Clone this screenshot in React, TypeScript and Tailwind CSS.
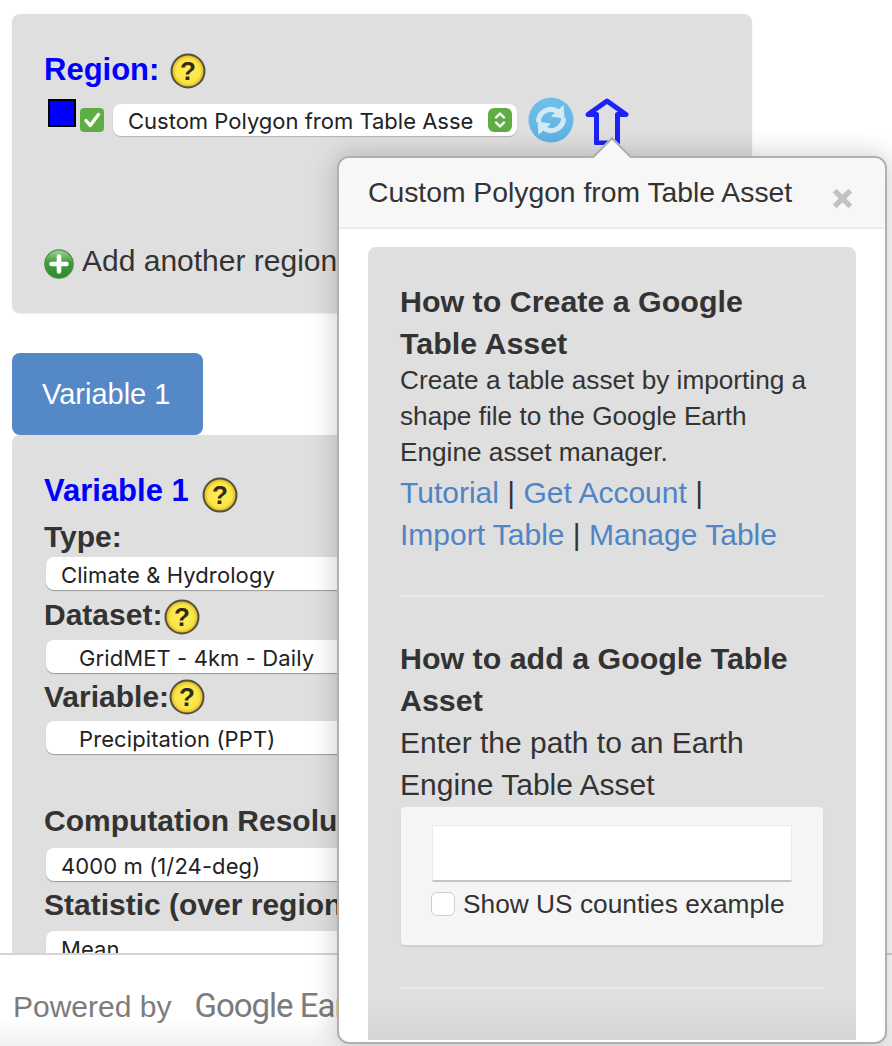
import type { ReactNode } from "react";

const sans = "font-['Liberation_Sans',Arial,sans-serif]";

function HelpIcon({ className = "" }: { className?: string }) {
  return (
    <svg viewBox="0 0 36 36" className={`h-9 w-9 shrink-0 ${className}`}>
      <defs>
        <radialGradient id="helpFill" cx="50%" cy="50%" r="52%">
          <stop offset="0%" stopColor="#fff05a" />
          <stop offset="72%" stopColor="#fbe344" />
          <stop offset="100%" stopColor="#c9a41c" />
        </radialGradient>
      </defs>
      <circle cx="18" cy="18" r="16.5" fill="url(#helpFill)" stroke="#55503a" strokeWidth="2" />
      <text x="18" y="27" textAnchor="middle" fontSize="26" fontWeight="700" fill="#2f2c18" fontFamily="Liberation Sans">?</text>
    </svg>
  );
}

function PlusIcon() {
  return (
    <svg viewBox="0 0 30 30" className="h-[30px] w-[30px] shrink-0">
      <defs>
        <linearGradient id="plusFill" x1="0" y1="0" x2="0" y2="1">
          <stop offset="0%" stopColor="#a5d49c" />
          <stop offset="45%" stopColor="#3f9a3d" />
          <stop offset="100%" stopColor="#2f8a31" />
        </linearGradient>
      </defs>
      <circle cx="15" cy="15" r="14.2" fill="url(#plusFill)" stroke="#4d8f4d" strokeWidth="1.2" />
      <path d="M15 7.5v15M7.5 15h15" stroke="#fff" strokeWidth="4.6" strokeLinecap="round" />
    </svg>
  );
}

function CheckIcon() {
  return (
    <svg viewBox="0 0 24 24" className="mt-[11px] ml-1 h-6 w-6 shrink-0">
      <rect width="24" height="24" rx="4" fill="#5fae45" />
      <path d="M6 12.5l4.2 5L18.5 6.5" fill="none" stroke="#fff" strokeWidth="3.4" strokeLinecap="round" strokeLinejoin="round" />
    </svg>
  );
}

function RefreshIcon() {
  return (
    <svg viewBox="0 0 46 46" className="ml-[11px] h-[46px] w-[46px] shrink-0">
      <defs>
        <linearGradient id="refreshFill" x1="0" y1="0" x2="0" y2="1">
          <stop offset="0%" stopColor="#6fc0ea" />
          <stop offset="100%" stopColor="#5fb2e2" />
        </linearGradient>
      </defs>
      <circle cx="23" cy="23" r="22.5" fill="url(#refreshFill)" />
      <g fill="#d3e9f6">
        <path d="M10.5 25a12.500 12.500 0 0 1 20-10" fill="none" stroke="#d3e9f6" strokeWidth="5" />
        <path d="M35.500 8L36.500 21.500L23 19.500z" />
        <g transform="rotate(180 23 23)">
          <path d="M10.500 25a12.500 12.500 0 0 1 20-10" fill="none" stroke="#d3e9f6" strokeWidth="5" />
          <path d="M35.500 8L36.500 21.500L23 19.500z" />
        </g>
      </g>
    </svg>
  );
}

function UpArrowIcon() {
  return (
    <svg viewBox="0 0 46 48" className="ml-[11px] h-12 w-[46px] shrink-0">
      <path d="M22 4L41 17.500H32.500V46H11.500V17.500H3z" fill="none" stroke="#1a22f5" strokeWidth="5" strokeLinejoin="round" />
    </svg>
  );
}

function Stepper() {
  return (
    <svg viewBox="0 0 24 24" className="h-6 w-6 shrink-0">
      <rect width="24" height="24" rx="6" fill="#5fae45" />
      <path d="M8 9.500l4-4 4 4M8 14.500l4 4 4-4" fill="none" stroke="#fff" strokeWidth="2.400" strokeLinecap="round" strokeLinejoin="round" />
    </svg>
  );
}

function Pill({ children, indent = false }: { children: ReactNode; indent?: boolean }) {
  return (
    <div
      className={`flex h-[33px] w-[680px] items-center rounded-lg bg-white pt-[3px] font-['Inter',sans-serif] text-[22px] tracking-[0.1px] text-[#222] shadow-[0_1px_1px_rgba(0,0,0,0.3)] ${
        indent ? "pl-[33px]" : "pl-[15px]"
      }`}
    >
      {children}
    </div>
  );
}

function A({ children }: { children: ReactNode }) {
  return <a className="whitespace-nowrap text-[#5084c4]">{children}</a>;
}

export default function App() {
  return (
    <div className={`relative h-[1046px] w-[892px] overflow-hidden bg-white text-[#333] ${sans}`}>
      <div className="flex w-[752px] flex-col pl-3 pt-[14px]">
        {/* Region card */}
        <section className="h-[299px] rounded-lg bg-[#dfdfdf] pl-8 pt-[34px] shadow-[0_1px_2px_rgba(0,0,0,0.08)]">
          <div className="flex h-11 items-center">
            <h2 className="text-[31px] font-bold text-[#0000ff]">Region:</h2>
            <HelpIcon className="ml-[11px] mt-[2px]" />
          </div>
          <div className="mt-[5px] flex h-12 items-start pl-1">
            <span className="mt-[2px] h-[28px] w-[28px] shrink-0 border-2 border-black bg-[#0000ff]" />
            <CheckIcon />
            <div className="ml-[9px] mt-[7px] flex h-[32px] w-[404px] shrink-0 items-center justify-between rounded-lg bg-white pl-[15px] pr-[5px] font-['Inter',sans-serif] text-[22px] text-[#222] shadow-[0_1px_1px_rgba(0,0,0,0.2)]">
              <span className="pt-[2px]">Custom Polygon from Table Asse</span>
              <Stepper />
            </div>
            <RefreshIcon />
            <UpArrowIcon />
          </div>
          <div className="mt-[98px] flex items-end gap-2">
            <PlusIcon />
            <span className="text-[30px] leading-[36px]">Add another region</span>
          </div>
        </section>

        {/* Variable tab */}
        <button className="mt-10 flex h-[82px] w-[191px] items-center rounded-lg bg-[#5588c6] pl-[30px] pt-[2px] text-[29px] text-white">
          Variable 1
        </button>

        {/* Variable card */}
        <section className="h-[700px] rounded-lg bg-[#dfdfdf] pl-[32px] pt-[35px]">
          <div className="flex h-[42px] items-center">
            <h2 className="text-[31px] font-bold text-[#0000ff]">Variable 1</h2>
            <HelpIcon className="ml-[13px] mt-[7px]" />
          </div>
          <div className="flex h-[45px] items-center pt-[3px] text-[30px] font-bold">Type:</div>
          <div className="pl-[2px]"><Pill>Climate &amp; Hydrology</Pill></div>
          <div className="flex h-[50px] items-center pb-[2px] text-[30px] font-bold">
            Dataset:<HelpIcon className="ml-[2px] mt-[5px]" />
          </div>
          <div className="pl-[2px]"><Pill indent>GridMET - 4km - Daily</Pill></div>
          <div className="flex h-[48px] items-center pb-[2px] text-[30px] font-bold">
            Variable:<HelpIcon className="mt-[2px]" />
          </div>
          <div className="pl-[2px]"><Pill indent>Precipitation (PPT)</Pill></div>
          <div className="mt-[46px] flex h-[48px] items-center pb-[8px] text-[30px] font-bold">Computation Resolution</div>
          <div className="pl-[2px]"><Pill>4000 m (1/24-deg)</Pill></div>
          <div className="flex h-[50px] items-center pb-[4px] text-[30px] font-bold">Statistic (over region)</div>
          <div className="pl-[2px]"><Pill>Mean</Pill></div>
        </section>
      </div>

      <footer className="absolute inset-x-0 bottom-0 flex h-[93px] items-center border-t-2 border-[#d4d4d4] bg-gradient-to-b from-white from-70% to-[#f1f1f1] pl-[13px] pt-[11px] text-[#7c7c7c]">
        <span className="text-[30px]">Powered by</span>
        <span className="ml-[23px] whitespace-nowrap font-['Roboto',sans-serif] text-[33px] tracking-[-1px]">Google Earth Engine</span>
      </footer>

      {/* Popover */}
      <div className="absolute left-[337px] top-[156px] h-[888px] w-[550px] rounded-xl border-2 border-[#b0b0b0] bg-white shadow-[0_0_28px_rgba(0,0,0,0.22)]">
        <span className="absolute -top-[15px] left-[258px] h-[30px] w-[30px] rotate-45 border-l-2 border-t-2 border-[#aaa] bg-[#f7f7f7]" />
        <div className="relative flex h-[71px] items-center justify-between rounded-t-xl border-b-2 border-[#ededed] bg-[#f7f7f7] pl-[29px] pr-8">
          <h3 className="text-[28.3px] text-[#333]">Custom Polygon from Table Asset</h3>
          <svg viewBox="0 0 20 20" className="mt-3 h-[21px] w-[21px] shrink-0">
            <path d="M2.500 2.500l15 15M17.500 2.500l-15 15" stroke="#c2c2c2" strokeWidth="5" />
          </svg>
        </div>
        <div className="px-[29px] pt-[18px]">
          <div className="relative h-[793px] overflow-hidden rounded-t-lg bg-[#dfdfdf] px-8 pt-[33px] text-[30px] leading-[42px]">
            <h4 className="text-[30.4px] font-bold">How to Create a Google Table Asset</h4>
            <p className="-mt-[2px] text-[26.2px] leading-[36px]">
              Create a table asset by importing a shape file to the Google Earth Engine asset manager.
            </p>
            <p className="mt-[2px]">
              <A>Tutorial</A> | <A>Get Account</A> | <A>Import Table</A> | <A>Manage Table</A>
            </p>
            <hr className="mt-[39px] border-t-2 border-[#ebebeb]" />
            <h4 className="mt-[40px] text-[30.4px] font-bold">How to add a Google Table Asset</h4>
            <p className="mt-px">Enter the path to an Earth Engine Table Asset</p>
            <div className="ml-px mt-px h-[138px] w-[422px] rounded bg-[#f5f5f5] pl-[31px] pt-[18px] shadow-[0_2px_2px_rgba(0,0,0,0.08)]">
              <div className="h-[57px] w-[360px] border border-b-2 border-[#ebebeb] border-b-[#c4c4c4] bg-white" />
              <label className="-ml-px mt-[10px] flex items-center gap-2 text-[26.3px] leading-[24px]">
                <span className="h-6 w-6 shrink-0 rounded-md border border-[#cfcfcf] bg-white" />
                Show US counties example
              </label>
            </div>
            <hr className="mt-[42px] border-t-2 border-[#ebebeb]" />
            <h4 className="mt-[41px] text-[30.4px] font-bold">How to edit a Table</h4>
            <div className="pointer-events-none absolute inset-x-0 bottom-0 h-10 bg-gradient-to-b from-transparent to-black/5" />
          </div>
        </div>
      </div>
    </div>
  );
}
